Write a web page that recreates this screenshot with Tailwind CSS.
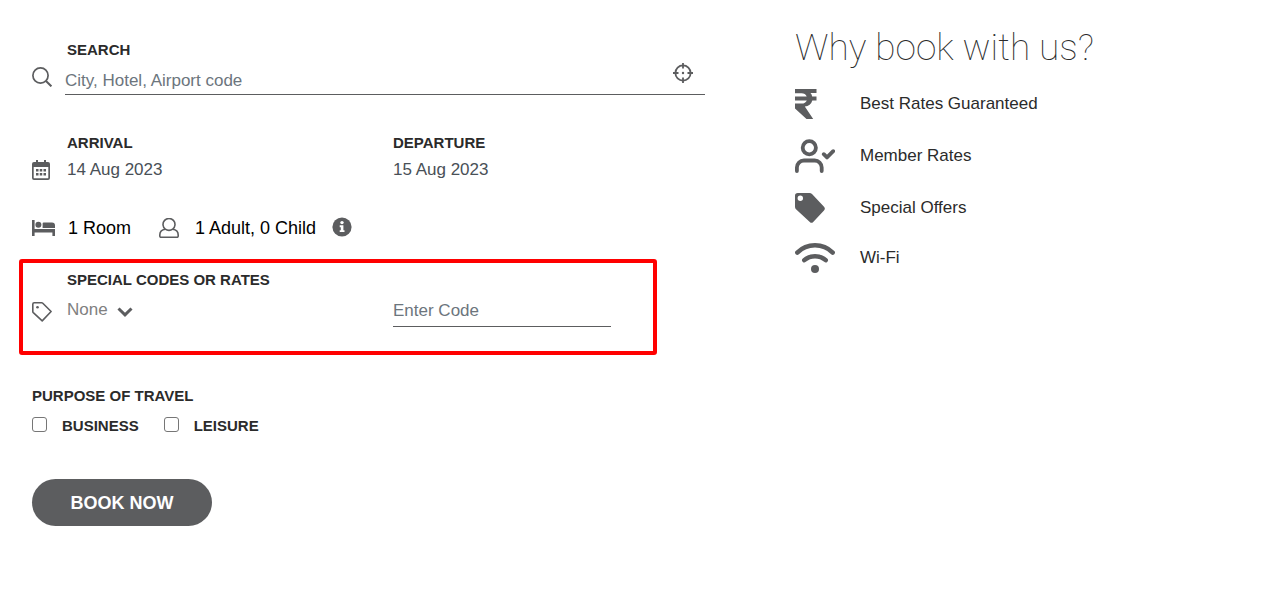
<!DOCTYPE html>
<html lang="en">
<head>
  <meta charset="UTF-8" />
  <meta name="viewport" content="width=device-width, initial-scale=1" />
  <title>Book a hotel</title>
  <script src="https://cdn.jsdelivr.net/npm/@tailwindcss/browser@4"></script>
</head>
<body class="bg-white min-h-screen font-['Liberation_Sans',Arial,sans-serif] text-[17px] leading-6 text-black">
  <main class="grid grid-cols-[60%_1fr] pt-10 pb-8">

    <form id="bookingForm" class="pl-8 pr-[57px]">
      <!-- Search -->
      <section class="grid grid-cols-[33px_1fr]">
        <label for="search" class="col-start-2 pl-[2px] text-[15px] leading-5 font-bold text-[#2b2b2b]">SEARCH</label>
        <svg class="col-start-1 mt-[7px] size-5" viewBox="0 0 20 20" fill="none" stroke="#5c5d5f" stroke-width="1.7">
          <circle cx="8.5" cy="8.5" r="7.6" />
          <path d="M14 14l5.4 5.4" stroke-width="2" />
        </svg>
        <div class="mt-[7px] flex h-7 items-center border-b border-[#5c5d5f]">
          <input type="text" id="search" name="search" placeholder="City, Hotel, Airport code" class="min-w-0 flex-grow outline-none placeholder:text-[#6c757d]" />
          <button type="button" id="locateBtn" title="Use my location" class="mr-3 -mt-4">
            <svg class="size-5" viewBox="0 0 20 20" fill="none" stroke="#5c5d5f" stroke-width="1.8">
              <circle cx="10" cy="10" r="7.6" />
              <path d="M10 0v5.500M10 14.500v5.500M0 10h5.500M14.500 10h5.500" />
              <circle cx="10" cy="10" r="1.2" fill="#5c5d5f" stroke="none" />
            </svg>
          </button>
        </div>
      </section>

      <!-- Dates -->
      <section class="mt-[38px] grid grid-cols-[35px_1fr]">
        <svg class="mt-[27px] h-5 w-[18px]" viewBox="0 0 18 20" fill="#5c5d5f">
          <path fill-rule="evenodd" d="M4 0h2v2h6V0h2v2h2a2 2 0 0 1 2 2v14a2 2 0 0 1-2 2H2a2 2 0 0 1-2-2V4a2 2 0 0 1 2-2h2zM1.700 7v10.700a.6.6 0 0 0 .6.6h13.400a.6.6 0 0 0 .6-.6V7z" />
          <path d="M4 9h2.500v2.500H4zM7.750 9h2.500v2.500h-2.500zM11.500 9H14v2.500h-2.500zM4 13h2.500v2.500H4zM7.750 13h2.500v2.500h-2.500zM11.500 13H14v2.500h-2.500z" />
        </svg>
        <div class="grid grid-cols-[326px_1fr]">
          <div class="flex flex-col">
            <label for="arrival" class="text-[15px] leading-5 font-bold text-[#2b2b2b]">ARRIVAL</label>
            <input type="text" id="arrival" name="arrival" value="14 Aug 2023" class="mt-[5px] h-6 w-40 text-[#495057] outline-none" />
          </div>
          <div class="flex flex-col">
            <label for="departure" class="text-[15px] leading-5 font-bold text-[#2b2b2b]">DEPARTURE</label>
            <input type="text" id="departure" name="departure" value="15 Aug 2023" class="mt-[5px] h-6 w-40 text-[#495057] outline-none" />
          </div>
        </div>
      </section>

      <!-- Rooms and guests -->
      <section class="mt-[34px] flex h-6 items-center text-lg">
        <button type="button" id="roomBtn" class="flex items-center gap-3">
          <svg class="h-4 w-6" viewBox="0 0 24 16" fill="#5c5d5f">
            <path d="M0 0h2.6v9H23v7h-2.6v-3.5H2.6V16H0z" />
            <circle cx="6.4" cy="4.8" r="3" />
            <path d="M10.6 8V3.4a1 1 0 0 1 1-1H20A3 3 0 0 1 23 5.400V8z" />
          </svg>
          1 Room
        </button>
        <button type="button" id="guestBtn" class="ml-7 flex items-center gap-4">
          <svg class="size-5" viewBox="0 0 20 20" fill="none" stroke="#5c5d5f" stroke-width="1.6">
            <path d="M6.300 11.200a6 6 0 1 1 7.400 0c-1.100.8-2.300 1.200-3.700 1.200s-2.600-.4-3.700-1.200z" />
            <path d="M6.300 11.200C3 11.700.8 13.700.8 17v1c0 .8.5 1.300 1.300 1.300h15.800c.8 0 1.300-.5 1.300-1.300v-1c0-3.300-2.200-5.300-5.500-5.800" />
          </svg>
          1 Adult, 0 Child
        </button>
        <button type="button" id="guestInfoBtn" title="Guest information" class="ml-4 -mt-[2px]">
          <svg class="size-5" viewBox="0 0 20 20">
            <circle cx="10" cy="10" r="9.600" fill="#5c5d5f" />
            <circle cx="10" cy="5.600" r="1.700" fill="#fff" />
            <path d="M7.700 8.300h3.700v4.900h1.100v1.900H7.700v-1.900h1.100v-3H7.700z" fill="#fff" />
          </svg>
        </button>
      </section>

      <!-- Special codes -->
      <section class="relative mt-[30px] grid grid-cols-[35px_1fr]">
        <div class="pointer-events-none absolute -top-[11px] right-12 -bottom-7 -left-[13px] rounded-[3px] border-4 border-[#ff0000]"></div>
        <svg class="mt-8 size-5" viewBox="0 0 20 20" fill="none" stroke="#5c5d5f" stroke-width="1.600" stroke-linejoin="round">
          <path d="M.8 2.200Q.8.800 2.200.8h7.400q.7 0 1.200.5l8.300 8.200-8.900 9.400-8.900-8.300q-.5-.5-.5-1.200z" />
          <circle cx="5.500" cy="5.300" r="1.300" fill="#5c5d5f" stroke="none" />
        </svg>
        <div class="grid grid-cols-[326px_1fr]">
          <div class="flex flex-col items-start">
            <label for="codeType" class="text-[15px] leading-5 font-bold text-[#2b2b2b]">SPECIAL CODES OR RATES</label>
            <div class="relative mt-2">
              <select id="codeType" name="codeType" class="block h-6 w-[66px] appearance-none text-[#808080] outline-none">
                <option>None</option>
              </select>
              <svg class="pointer-events-none absolute top-2 right-0 h-3 w-4" viewBox="0 0 16 12" fill="none" stroke="#5c5d5f" stroke-width="3">
                <path d="M1.500 2.500L8 8.800l6.500-6.300" />
              </svg>
            </div>
          </div>
          <input type="text" id="code" name="code" aria-label="Code" placeholder="Enter Code" class="mt-[29px] h-7 w-[218px] border-b border-[#5c5d5f] pb-[3px] outline-none placeholder:text-[#6c757d]" />
        </div>
      </section>

      <!-- Purpose of travel -->
      <fieldset class="mt-[59px]">
        <legend class="text-[15px] leading-5 font-bold text-[#2b2b2b]">PURPOSE OF TRAVEL</legend>
        <div class="mt-[10px] flex gap-[25px] text-[15px] leading-5 font-bold text-[#2b2b2b]">
          <label class="flex items-center gap-[15px]">
            <input type="checkbox" name="business" class="-mt-[3px] size-[15px] appearance-none rounded-[3px] border border-[#767676] checked:bg-[#5c5d5f]" />
            BUSINESS
          </label>
          <label class="flex items-center gap-[15px]">
            <input type="checkbox" name="leisure" class="-mt-[3px] size-[15px] appearance-none rounded-[3px] border border-[#767676] checked:bg-[#5c5d5f]" />
            LEISURE
          </label>
        </div>
      </fieldset>

      <button type="submit" class="mt-[43px] h-[47px] w-[180px] rounded-full bg-[#5c5d5f] text-lg font-bold text-white hover:bg-[#4a4b4d]">BOOK NOW</button>
    </form>

    <aside class="-mt-4 pl-[33px] text-[#2b2b2b]">
      <h2 class="font-['Roboto','Liberation_Sans',sans-serif] text-[37px] leading-[48px] font-thin">Why book with us?</h2>
      <ul class="mt-[6px]">
        <li class="flex h-[52px] items-center gap-[25px]">
          <svg class="h-[30px] w-10" viewBox="0 0 40 30" fill="#5c5d5f">
            <path d="M0 0h21.500v4h-6q1.300 1.500 1.700 3.400h4.300v4h-4.200C16.300 15 13.600 17 9.800 17.500L18.200 30h-6.700L0 19.500V14.500h6.500c2.700 0 4.500-1 5.300-3.100H0v-4h11.700C10.800 5.300 9 4.300 6.500 4.300H0z" />
          </svg>
          Best Rates Guaranteed
        </li>
        <li class="flex h-[52px] items-center gap-[25px]">
          <svg class="h-[34px] w-10" viewBox="0 0 40 34" fill="none" stroke="#5c5d5f" stroke-width="3.800" stroke-linecap="round" stroke-linejoin="round">
            <circle cx="14.300" cy="8.800" r="6.600" />
            <path d="M1.900 32v-3.500a7 7 0 0 1 7-7h10.800a7 7 0 0 1 7 7V32" />
            <path d="M28.800 15.200l3.200 3.200 6.200-6.200" />
          </svg>
          Member Rates
        </li>
        <li class="flex h-[52px] items-center gap-[25px]">
          <svg class="h-[30px] w-10" viewBox="0 0 40 30" fill="#5c5d5f">
            <path fill-rule="evenodd" d="M0 2.800A2.800 2.800 0 0 1 2.800 0h11.700q1.500 0 2.500 1l12 12.800q1.700 1.800 0 3.600L18.200 29q-1.700 1.700-3.400 0L1 16.200q-1-1-1-2.500zM5.300 2.600a2.700 2.700 0 1 0 0 5.400 2.700 2.700 0 0 0 0-5.400z" />
          </svg>
          Special Offers
        </li>
        <li class="flex h-12 items-center gap-[25px]">
          <svg class="h-[30px] w-10" viewBox="0 0 40 30" fill="none" stroke="#5c5d5f" stroke-width="4.500" stroke-linecap="round">
            <path d="M2.300 9.600C12-.1 28-.1 37.700 9.600" />
            <path d="M9.300 17.200c6-5.400 15.400-5.400 21.400 0" />
            <circle cx="20" cy="26" r="4" fill="#5c5d5f" stroke="none" />
          </svg>
          Wi-Fi
        </li>
      </ul>
    </aside>
  </main>
</body>
</html>
